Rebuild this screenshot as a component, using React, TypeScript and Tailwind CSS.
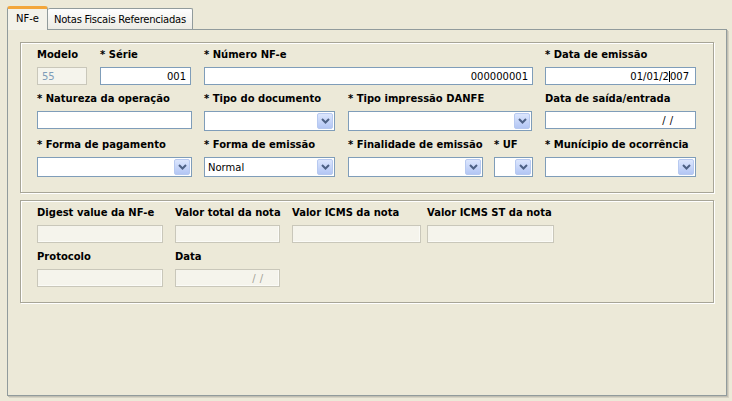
import type { JSX, ReactNode } from 'react';

const labelCls = "block h-[20px] pt-[2px] text-[10px] font-bold leading-[12px] text-black whitespace-nowrap";

function Field({ label, width, children }: { label: string; width: number; children: ReactNode }): JSX.Element {
    return (
        <div className="flex flex-col" style={{ width }}>
            <span className={labelCls}>{label}</span>
            {children}
        </div>
    );
}

function TextBox({ value, disabled }: { value?: ReactNode; disabled?: boolean }): JSX.Element {
    return (
        <div
            className={
                disabled
                    ? 'flex h-[18px] items-center justify-end border border-[#c9c7ba] bg-[#f5f4ec] px-[4px] text-[10px] text-[#a3a196] shadow-[inset_-1px_-1px_0_#fbfbf7]'
                    : 'flex h-[18px] items-center justify-end border border-[#7f9db9] bg-white px-[4px] text-[10px] text-black'
            }
        >
            {value}
        </div>
    );
}

function LeftBox({ value, disabled }: { value: string; disabled?: boolean }): JSX.Element {
    return (
        <div
            className={
                disabled
                    ? 'flex h-[18px] items-center border border-[#c9c7ba] bg-[#f5f4ec] px-[4px] text-[10px] text-[#7f9db9]'
                    : 'flex h-[18px] items-center border border-[#7f9db9] bg-white px-[4px] text-[10px]'
            }
        >
            {value}
        </div>
    );
}

function Combo({ value }: { value?: string }): JSX.Element {
    return (
        <div className="flex h-[20px] items-center border border-[#7f9db9] bg-white pl-[3px] pr-[1px] text-[10px] text-black">
            <span className="flex-1">{value}</span>
            <div className="flex h-[16px] w-[16px] items-center justify-center rounded-[2px] border border-[#b7c9f0] bg-gradient-to-b from-[#dce6fd] to-[#b3c6f4]">
                <svg width="9" height="6" viewBox="0 0 9 6">
                    <path d="M1 1 L4.5 4.5 L8 1" fill="none" stroke="#4d6185" strokeWidth="2" />
                </svg>
            </div>
        </div>
    );
}

function GroupBox({ children, className }: { children: ReactNode; className?: string }): JSX.Element {
    return (
        <div className={'border border-[#a7a597] shadow-[inset_1px_1px_0_#fff,1px_1px_0_#fff] ' + (className ?? '')}>
            {children}
        </div>
    );
}

function Slashes({ pad }: { pad: string }): JSX.Element {
    return (
        <span className={'flex gap-[4px] ' + pad}>
            <span>/</span>
            <span>/</span>
        </span>
    );
}

export default function App(): JSX.Element {
    return (
        <div
            className="h-[401px] w-[732px] overflow-hidden bg-[#ece9d8] text-black"
            style={{ fontFamily: '"DejaVu Sans", Verdana, sans-serif' }}
        >
            {/* tabs */}
            <div className="flex items-end pl-[7px] pt-[6px]">
                <div className="relative z-10 -mb-px flex h-[24px] w-[41px] items-center justify-center rounded-t-[3px] border-x border-t-[3px] border-x-[#919b9c] border-t-[#f3a63b] bg-[#f3f2ea] pb-[2px] text-[10px]">
                    NF-e
                </div>
                <div className="flex h-[21px] items-center rounded-t-[2px] border-r border-t border-[#919b9c] bg-gradient-to-b from-[#fefefe] to-[#ecebe4] px-[6px] text-[10px] tracking-[-0.25px]">
                    Notas Fiscais Referenciadas
                </div>
            </div>

            {/* tab panel */}
            <div className="ml-[7px] h-[367px] w-[720px] border border-[#919b9c] bg-[#ece9d8] px-[12px] pt-[12px] shadow-[1px_1px_0_#c1bfb3,2px_2px_0_#d6d3c4]">
                <GroupBox className="h-[151px] w-[694px] pl-[16px] pt-[4px]">
                    <div className="flex">
                        <Field label="Modelo" width={50}>
                            <LeftBox value="55" disabled />
                        </Field>
                        <div className="ml-[13px]">
                            <Field label="* Série" width={91}>
                                <TextBox value="001" />
                            </Field>
                        </div>
                        <div className="ml-[13px]">
                            <Field label="* Número NF-e" width={329}>
                                <TextBox value="000000001" />
                            </Field>
                        </div>
                        <div className="ml-[12px]">
                            <Field label="* Data de emissão" width={151}>
                                <TextBox
                                    value={
                                        <span className="pr-[2px]">
                                            01/01/2<span className="border-l border-black">0</span>07
                                        </span>
                                    }
                                />
                            </Field>
                        </div>
                    </div>

                    <div className="mt-[6px] flex">
                        <Field label="* Natureza da operação" width={155}>
                            <LeftBox value="" />
                        </Field>
                        <div className="ml-[12px]">
                            <Field label="* Tipo do documento" width={131}>
                                <Combo />
                            </Field>
                        </div>
                        <div className="ml-[13px]">
                            <Field label="* Tipo impressão DANFE" width={184}>
                                <Combo />
                            </Field>
                        </div>
                        <div className="ml-[13px]">
                            <Field label="Data de saída/entrada" width={151}>
                                <TextBox value={<Slashes pad="pr-[18px]" />} />
                            </Field>
                        </div>
                    </div>

                    <div className="mt-[6px] flex">
                        <Field label="* Forma de pagamento" width={155}>
                            <Combo />
                        </Field>
                        <div className="ml-[12px]">
                            <Field label="* Forma de emissão" width={131}>
                                <Combo value="Normal" />
                            </Field>
                        </div>
                        <div className="ml-[13px]">
                            <Field label="* Finalidade de emissão" width={135}>
                                <Combo />
                            </Field>
                        </div>
                        <div className="ml-[11px]">
                            <Field label="* UF" width={39}>
                                <Combo />
                            </Field>
                        </div>
                        <div className="ml-[12px]">
                            <Field label="* Munícipio de ocorrência" width={151}>
                                <Combo />
                            </Field>
                        </div>
                    </div>
                </GroupBox>

                <GroupBox className="mt-[7px] h-[103px] w-[694px] pl-[16px] pt-[4px]">
                    <div className="flex">
                        <Field label="Digest value da NF-e" width={126}>
                            <TextBox disabled />
                        </Field>
                        <div className="ml-[12px]">
                            <Field label="Valor total da nota" width={105}>
                                <TextBox disabled />
                            </Field>
                        </div>
                        <div className="ml-[12px]">
                            <Field label="Valor ICMS da nota" width={129}>
                                <TextBox disabled />
                            </Field>
                        </div>
                        <div className="ml-[6px]">
                            <Field label="Valor ICMS ST da nota" width={127}>
                                <TextBox disabled />
                            </Field>
                        </div>
                    </div>
                    <div className="mt-[6px] flex">
                        <Field label="Protocolo" width={126}>
                            <TextBox disabled />
                        </Field>
                        <div className="ml-[12px]">
                            <Field label="Data" width={105}>
                                <TextBox disabled value={<Slashes pad="pr-[12px]" />} />
                            </Field>
                        </div>
                    </div>
                </GroupBox>
            </div>
        </div>
    );
}
